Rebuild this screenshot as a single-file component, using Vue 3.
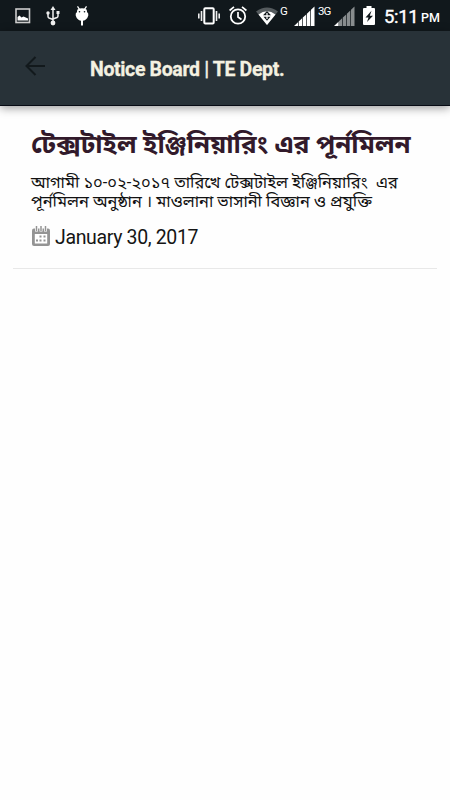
<script setup>
  import { ref } from 'vue'

  const time = ref('5:11')
  const title = ref('Notice Board | TE Dept.')

  const notices = ref([
    {
      heading: 'টেক্সটাইল ইঞ্জিনিয়ারিং এর পূর্নমিলন',
      // each line of the excerpt
      lines: [
        'আগামী ১০-০২-২০১৭ তারিখে টেক্সটাইল ইঞ্জিনিয়ারিং  এর',
        'পূর্নমিলন অনুষ্ঠান । মাওলানা ভাসানী বিজ্ঞান ও প্রযুক্তি'
      ],
      date: 'January 30, 2017'
    }
  ])
</script>

<template>
  <div class="screen">
    <div class="status-bar">
      <svg class="picture" width="16" height="16" viewBox="0 0 16 16">
        <rect x="1" y="1" width="13.5" height="13.5" fill="none" stroke="#ccc" stroke-width="1.6" />
        <path d="M2.500 12.500V9l2-1.500 2 2 2-1 4.500 2v2z" fill="#fff" />
      </svg>
      <svg class="usb" width="14" height="20" viewBox="0 0 14 20">
        <path d="M7 16V3M2 7v3.500q0 1 1 1.500l4 1.500M12 6v4q0 1-1 1.500l-4 1.500" fill="none" stroke="#eee" stroke-width="1.500" />
        <path d="M7 0l2.500 4h-5zM10.500 5h3v3h-3z" fill="#eee" />
        <circle cx="2" cy="7" r="1.700" fill="#eee" />
        <circle cx="7" cy="17" r="2.400" fill="#eee" />
      </svg>
      <svg class="droid" width="14" height="20" viewBox="0 0 14 20">
        <path d="M2.500.3l2 3M11.500.3l-2 3" stroke="#fff" stroke-width="1.200" />
        <path d="M2.500 3.500q4.500-2.500 9 0 .7 1.500.5 2.500 1.800 1 1.300 3.500-1.300 4.500-5.300 5.300v4.700H6v-4.700Q2 14 .7 9.500.2 7 2 6q-.2-1 .5-2.500z" fill="#fff" />
        <circle cx="4.500" cy="5.800" r=".8" fill="#11181c" />
        <circle cx="9.500" cy="5.800" r=".8" fill="#11181c" />
      </svg>

      <svg class="vibrate" width="24" height="18" viewBox="0 0 24 18">
        <rect x="7.300" y="1.200" width="9.400" height="15.300" rx="1" fill="none" stroke="#fff" stroke-width="2" />
        <path d="M4.500 4v10M19.500 4v10M1.800 6.500v5M22.200 6.500v5" stroke="#eee" stroke-width="1.600" />
      </svg>
      <svg class="alarm" width="18" height="19" viewBox="0 0 18 19">
        <circle cx="9" cy="10.500" r="7.200" fill="none" stroke="#fff" stroke-width="1.800" />
        <path d="M.6 4.500L5 .9M17.400 4.500L13 .9M9 6v5l3.500 2.500" fill="none" stroke="#fff" stroke-width="1.700" />
      </svg>
      <svg class="wifi" width="22" height="18" viewBox="0 0 22 18">
        <path d="M0 4.500Q11-3.500 22 4.500L11 18z" fill="#555b5e" />
        <path d="M2.500 7.500q8.500-6.500 17 0L11 18z" fill="#fff" />
        <path d="M11 4l4 4.200H7zM7.500 9.800h7L11 13.800z" fill="#11181c" />
        <path d="M11 6v6" stroke="#fff" stroke-width="1.200" />
      </svg>
      <span class="network g">G</span>
      <svg class="signal" width="21" height="20" viewBox="0 0 21 20">
        <path d="M0 20l4-3.800V20zM4.700 15.500l3.400-3.200V20H4.700zM8.800 11.600l3.400-3.200V20H8.800zM12.900 7.700l3.400-3.200V20h-3.400zM17 3.800L20.500.5V20H17z" fill="#fff" />
      </svg>
      <span class="network three-g">3G</span>
      <svg class="signal weak" width="21" height="20" viewBox="0 0 21 20">
        <path d="M4.700 15.500l3.400-3.200V20H4.700zM8.800 11.600l3.400-3.200V20H8.800zM12.900 7.700l3.400-3.200V20h-3.400zM17 3.800L20.500.5V20H17z" fill="#888c8e" />
        <path d="M0 20l4.500-4.300V20z" fill="#fff" />
      </svg>
      <svg class="battery" width="12" height="19" viewBox="0 0 12 19">
        <path d="M1 2h2.500V0h5v2H11q1 0 1 1v15q0 1-1 1H1q-1 0-1-1V3q0-1 1-1z" fill="#fff" />
        <path d="M8.500 4.800L2.500 11.500h3L4 16l6-6.300H6.800z" fill="#11181c" />
      </svg>
      <span class="time">{{ time }}</span>
      <span class="pm">PM</span>
    </div>

    <header class="app-bar">
      <svg class="back" width="20" height="20" viewBox="0 0 20 20">
        <path d="M20 10H2M10.500 1L1.500 10l9 9" fill="none" stroke="#12191c" stroke-width="2" />
      </svg>
      <h1>{{ title }}</h1>
    </header>

    <ul class="notices">
      <li v-for="(notice, index) in notices" :key="index" class="notice">
        <h2>{{ notice.heading }}</h2>
        <p v-for="line in notice.lines" :key="line">{{ line }}</p>
        <div class="date">
          <svg width="18" height="20" viewBox="0 0 18 20">
            <rect x="0" y="2.500" width="18" height="17.500" rx="2" fill="#949494" />
            <path d="M4.500 0v5.500M9 0v5.500M13.500 0v5.500" stroke="#fff" stroke-width="3" />
            <path d="M4.500 0v5M9 0v5M13.500 0v5" stroke="#949494" stroke-width="1.500" />
            <rect x="2.800" y="8" width="12.400" height="9.500" fill="#fff" />
            <path d="M7.500 10.500h2M11.500 10.500h2M4 14.500h2M7.500 14.500h2M11.500 14.500h2" stroke="#949494" stroke-width="2" />
          </svg>
          <span>{{ notice.date }}</span>
        </div>
      </li>
    </ul>
  </div>
</template>

<style>
body {
  background-color: #fefefe;
}
</style>

<style scoped>
.screen {
  width: 450px;
  height: 800px;
  overflow: hidden;
  background-color: #fefefe;
  font-family: Roboto, "Noto Sans Bengali", "Noto Sans", sans-serif;
}

.status-bar {
  display: flex;
  align-items: flex-start;
  box-sizing: border-box;
  height: 31px;
  padding-top: 6px;
  background-color: #11181c;
  color: #fff;
}

.status-bar > * {
  flex: none;
}

.picture {
  margin: 2px 0 0 15px;
}

.usb {
  margin-left: 15px;
}

.droid {
  margin-left: 15px;
}

.vibrate {
  margin: 1px 0 0 108px;
}

.alarm {
  margin-left: 8px;
}

.wifi {
  margin: 1px 0 0 9px;
}

.network {
  font-size: 11.500px;
  line-height: 11px;
}

.g {
  width: 8px;
  margin-left: 2px;
}

.signal {
  margin-left: 6px;
}

.three-g {
  width: 14px;
  margin-left: 3px;
  letter-spacing: -1px;
}

.weak {
  margin-left: 2px;
}

.battery {
  margin-left: 8px;
}

.time {
  width: 34px;
  margin-left: 9px;
  font-size: 18.500px;
  line-height: 22px;
  letter-spacing: -0.3px;
  -webkit-text-stroke: 0.4px #fff;
}

.pm {
  margin: 4px 0 0 3px;
  font-size: 12.500px;
  line-height: 15px;
  font-weight: 500;
}

.app-bar {
  display: flex;
  align-items: flex-start;
  box-sizing: border-box;
  height: 75px;
  padding: 25px 0 0 25px;
  background-color: #283238;
  border-bottom: 1px solid #070b14;
  box-shadow: 0 2px 9px rgba(0, 0, 0, 0.4);
}

h1 {
  margin: 2px 0 0 45px;
  color: #f4f1e1;
  font-size: 19.500px;
  line-height: 23px;
  letter-spacing: -0.35px;
  font-weight: 700;
  -webkit-text-stroke: 0.3px #f4f1e1;
}

.notices {
  margin: 0;
  padding: 0 13px;
  list-style: none;
}

.notice {
  box-sizing: border-box;
  height: 163px;
  padding: 20px 18px 0;
  border-bottom: 1px solid #e8e8e8;
  white-space: pre;
}

/* slightly widened Bengali bold */
h2 {
  margin: 0 0 10px;
  height: 37px;
  color: #321a2b;
  font-size: 24.500px;
  line-height: 37px;
  font-weight: 700;
  transform: scaleX(1.061);
  transform-origin: 0 0;
}

p {
  margin: 0;
  height: 19px;
  color: #111;
  font-size: 16.400px;
  line-height: 19px;
}

.date {
  display: flex;
  align-items: flex-start;
  margin-top: 15px;
  color: #151515;
  font-size: 19.500px;
  line-height: 23px;
  letter-spacing: -0.35px;
}

.date svg {
  margin-left: 1px;
}

.date span {
  margin-left: 5px;
}
</style>
